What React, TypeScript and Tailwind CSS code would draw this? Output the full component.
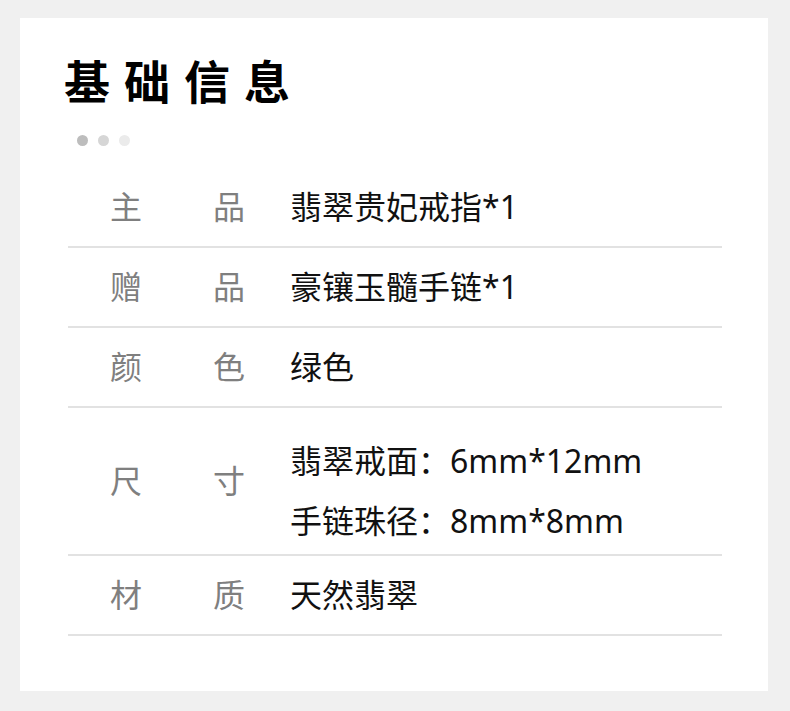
const font = { fontFamily: '"Noto Sans", "Noto Sans CJK SC", sans-serif' };

interface RowProps {
  label: [string, string];
  values: string[];
  tall?: boolean;
}

const InfoRow = ({ label, values, tall }: RowProps) => (
  <div
    className={`flex items-center border-b-2 border-[#e2e2e2] ${
      tall ? "h-[148px]" : "h-[80px]"
    }`}
  >
    <div className="ml-[42px] flex w-[135px] justify-between text-[32px] leading-none text-[#7f7f7f]">
      <span>{label[0]}</span>
      <span>{label[1]}</span>
    </div>
    <div className={`ml-[45px] flex flex-col text-[32px] text-[#111] ${tall ? "mt-[20px]" : ""}`}>
      {values.map((v) => (
        <span key={v} className="leading-[60px]">
          {v}
        </span>
      ))}
    </div>
  </div>
);

export default function App() {
  return (
    <div className="min-h-[711px] bg-[#f0f0f0] pt-[18px] pl-[20px]" style={font}>
      <div className="h-[673px] w-[748px] bg-white pl-[48px] pr-[46px] pt-[40px]">
        {/* Title */}
        <h1 className="-ml-[4px] text-[46px] font-bold leading-none tracking-[14px] text-black">
          基础信息
        </h1>
        <div className="mt-[31px] ml-[9px] flex gap-[10px]">
          <span className="h-[11px] w-[11px] rounded-full bg-[#bdbdbd]" />
          <span className="h-[11px] w-[11px] rounded-full bg-[#d6d6d6]" />
          <span className="h-[11px] w-[11px] rounded-full bg-[#ebebeb]" />
        </div>

        <div className="mt-[22px]">
          <InfoRow label={["主", "品"]} values={["翡翠贵妃戒指*1"]} />
          <InfoRow label={["赠", "品"]} values={["豪镶玉髓手链*1"]} />
          <InfoRow label={["颜", "色"]} values={["绿色"]} />
          <InfoRow
            tall
            label={["尺", "寸"]}
            values={["翡翠戒面：6mm*12mm", "手链珠径：8mm*8mm"]}
          />
          <InfoRow label={["材", "质"]} values={["天然翡翠"]} />
        </div>
      </div>
    </div>
  );
}
